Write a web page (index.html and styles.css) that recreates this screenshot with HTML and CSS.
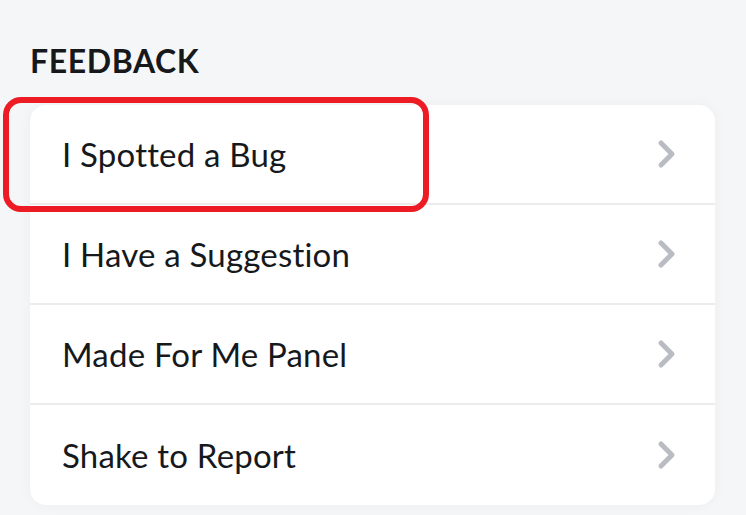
FILE: index.html
```html
<!DOCTYPE html>
<html lang="en">
<head>
  <meta charset="UTF-8" />
  <meta name="viewport" content="width=device-width, initial-scale=1.0" />
  <title>Feedback</title>
  <link rel="stylesheet" href="styles.css">
</head>
<body>
  <div class="section">
    <h2>FEEDBACK</h2>
    <div class="card">
      <div class="row">
        <span>I Spotted a Bug</span>
        <svg class="chevron" viewBox="0 0 20 30"><path d="M4 4 L15 15 L4 26" /></svg>
        <div class="highlight"></div>
      </div>
      <div class="row">
        <span>I Have a Suggestion</span>
        <svg class="chevron" viewBox="0 0 20 30"><path d="M4 4 L15 15 L4 26" /></svg>
      </div>
      <div class="row">
        <span>Made For Me Panel</span>
        <svg class="chevron" viewBox="0 0 20 30"><path d="M4 4 L15 15 L4 26" /></svg>
      </div>
      <div class="row">
        <span>Shake to Report</span>
        <svg class="chevron" viewBox="0 0 20 30"><path d="M4 4 L15 15 L4 26" /></svg>
      </div>
    </div>
  </div>
</body>
</html>
```

FILE: styles.css
```css
* {
  box-sizing: border-box;
  margin: 0;
  padding: 0;
}

body {
  background: #f5f6f8;
  font-family: Lato, 'Liberation Sans', sans-serif;
  color: #16191c;
  height: 100vh;
  overflow: hidden;
}

.section {
  padding: 45px 31px 0 30px;
}

h2 {
  font-size: 32px;
  line-height: 32px;
  font-weight: 700;
  letter-spacing: 0.6px;
  color: #16181b;
  margin-bottom: 28px;
}

.card {
  background: white;
  border-radius: 16px;
  box-shadow: 0 0 14px rgba(0, 0, 0, 0.04);
}

.row {
  position: relative;
  height: 100px;
  display: flex;
  align-items: center;
  justify-content: space-between;
  padding: 0 38px 0 32px;
  border-bottom: 2px solid #ececec;
  font-size: 33px;
  letter-spacing: 0.2px;
}

.row:last-child {
  border-bottom: none;
}

.chevron {
  width: 20px;
  height: 30px;
  fill: none;
  stroke: #b9bdc3;
  stroke-width: 5;
  stroke-linecap: round;
  stroke-linejoin: round;
}

.highlight {
  position: absolute;
  left: -27px;
  top: -8px;
  width: 426px;
  height: 115px;
  border: 6px solid #ed1c24;
  border-radius: 18px;
}
```
